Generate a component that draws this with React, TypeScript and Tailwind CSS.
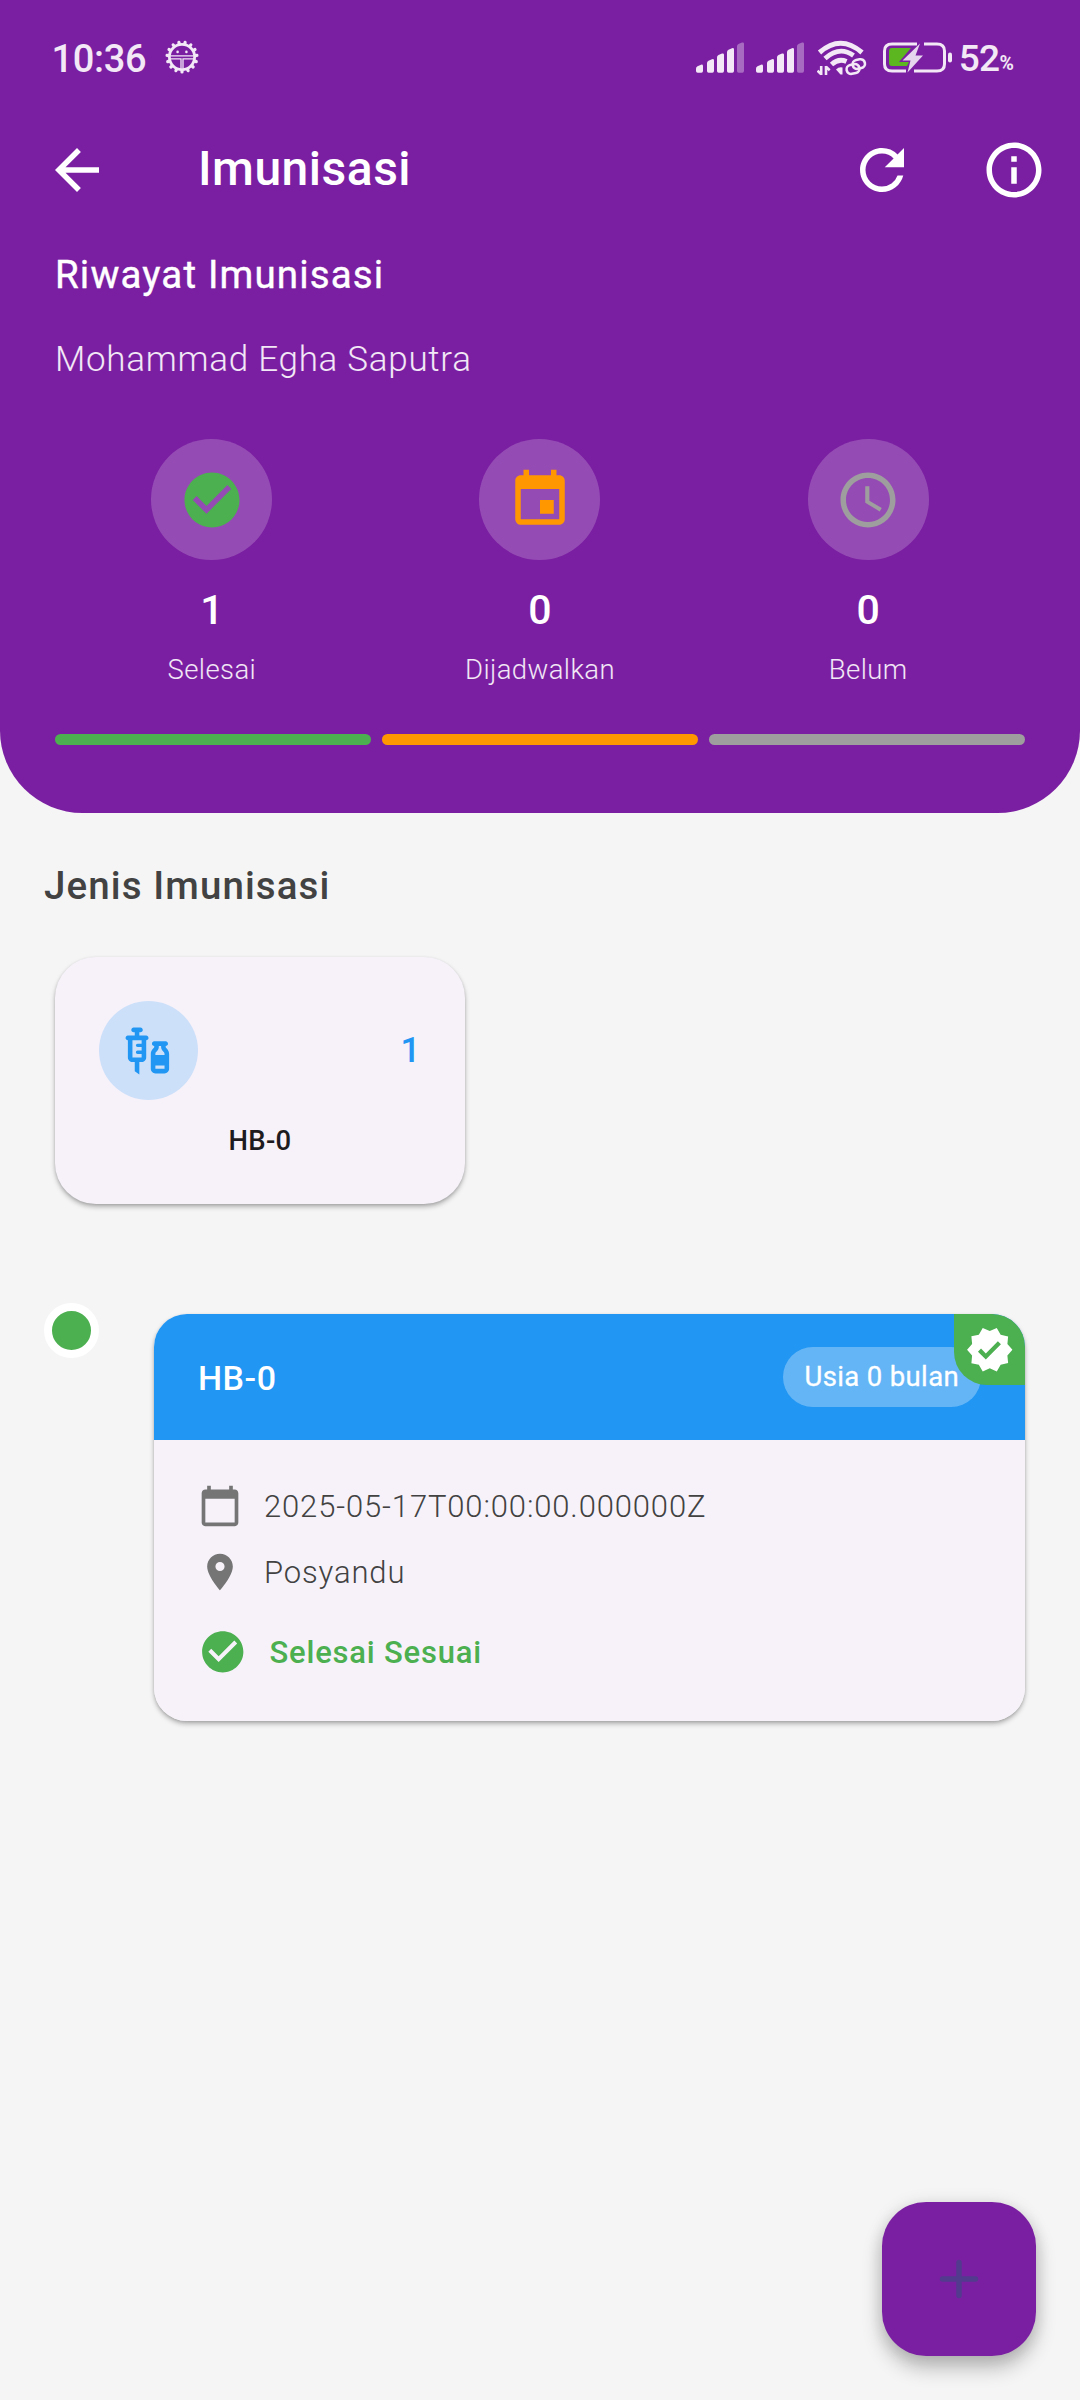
import React from 'react';
import {
  MdArrowBack,
  MdCalendarToday,
  MdCheckCircle,
  MdEvent,
  MdInfoOutline,
  MdPlace,
  MdRefresh,
  MdSchedule,
  MdVaccines,
  MdVerified,
} from 'react-icons/md';

const signalBars = [
  { x: 0, top: 22.5 },
  { x: 11, top: 17 },
  { x: 21, top: 11.3 },
  { x: 31, top: 6 },
  { x: 41, top: 0.3 },
];

function GearIcon() {
  const teeth = Array.from({ length: 15 }, (_, i) => i * 24 + 12);
  return (
    <svg width="34" height="34" viewBox="0 0 34 34" fill="none" stroke="currentColor" className="mb-[19.5px] ml-[19px]">
      <circle cx="17" cy="17" r="12.6" strokeWidth="2.8" />
      {teeth.map((a) => (
        <path key={a} d="M17 3.6V2" strokeWidth="3.2" strokeLinecap="round" transform={`rotate(${a} 17 17)`} />
      ))}
      <path d="M5.500 15.900H28.500M5.500 18.800H16V28.500M28.500 18.800H18V28.500" strokeWidth="1.3" />
      <circle cx="12.6" cy="11.9" r="1.3" fill="currentColor" stroke="none" />
      <circle cx="21.4" cy="11.9" r="1.3" fill="currentColor" stroke="none" />
    </svg>
  );
}

function SignalIcon() {
  return (
    <svg width="48" height="31" viewBox="0 0 48 31" fill="currentColor" className="mb-5">
      {signalBars.map(({ x, top }, i) => (
        <path
          key={x}
          opacity={i === 4 ? 0.38 : 1}
          d={`M${x} ${top + 4}Q${x} ${top + 2.5} ${x + 1.5} ${top + 1.8}L${x + 5} ${top + 0.2}Q${x + 7} ${top - 0.3} ${x + 7} ${top + 1.5}V29Q${x + 7} 30.7 ${x + 5.3} 30.7H${x + 1.7}Q${x} 30.7 ${x} 29Z`}
        />
      ))}
    </svg>
  );
}

function WifiIcon() {
  return (
    <svg width="50" height="36" viewBox="0 0 50 36" fill="none" stroke="currentColor" className="mb-[17px] ml-[13px]">
      <path d="M2.500 12.500Q23.500 -6 45 12.500" strokeWidth="5" />
      <path d="M8 18.500Q22.500 5.500 36.500 15.500" strokeWidth="4.8" />
      <path d="M14.500 24.500Q21.500 18 29.500 21.500" strokeWidth="4.8" />
      <path d="M19 29.500Q22 26.500 25.500 27.500V34.500H23.500Z" fill="currentColor" stroke="none" />
      <path d="M4.200 26V35M9 35V26M0.500 30.800L4.200 34.200M12.700 30.200L9 26.800" strokeWidth="2.6" />
      <rect x="29.500" y="24.500" width="13" height="9" rx="4.5" strokeWidth="2.6" transform="rotate(-12 36 29)" />
      <rect x="35.500" y="19.500" width="12.500" height="9" rx="4.5" strokeWidth="2.6" transform="rotate(-12 42 24)" />
    </svg>
  );
}

function BatteryIcon() {
  return (
    <svg width="70" height="32" viewBox="0 0 70 32" className="mb-[19px] ml-[16px]">
      <path
        d="M34 2H9Q1.500 2 1.500 9V22Q1.500 29 9 29H23M31 29H54Q61.500 29 61.500 22V9Q61.500 2 54 2H41"
        fill="none"
        stroke="currentColor"
        strokeWidth="3"
      />
      <rect x="65" y="10.500" width="4" height="10" rx="2" fill="currentColor" />
      <path d="M9 6H28L16 20H26L24 24H9Q6 24 6 21V9Q6 6 9 6Z" fill="#5bb61f" />
      <path d="M37 1.500L19.500 18.500H27.500L24.500 30.500L40 13.500H32.500Z" fill="#e6d6ee" />
    </svg>
  );
}

function StatusBar() {
  return (
    <div className="flex h-[93px] items-end pr-[62.500px] pl-[51.500px] text-[#f2e8f6]">
      <span className="mb-3 text-[38px] leading-[44px] font-medium tracking-[-0.3px]">10:36</span>
      <GearIcon />
      <div className="ml-auto flex items-end">
        <div className="flex gap-3">
          <SignalIcon />
          <SignalIcon />
        </div>
        <WifiIcon />
        <BatteryIcon />
        <span className="mb-3 ml-[6px] text-[37px] leading-[44px] font-medium tracking-[-0.6px]">52</span>
        <span className="mb-[17px] w-[18px] text-[19.500px] leading-[24px] font-bold tracking-[-0.5px]">%</span>
      </div>
    </div>
  );
}

function AppBar() {
  return (
    <div className="flex h-[154px] items-center pr-[33px] pl-11 text-white">
      <MdArrowBack size={66} />
      <h1 className="mt-[-3px] ml-[88px] text-[48px] leading-[56px] font-medium tracking-[0.5px]">Imunisasi</h1>
      <div className="ml-auto flex gap-[66px]">
        <MdRefresh size={66} />
        <MdInfoOutline size={66} />
      </div>
    </div>
  );
}

function Stat({ icon, value, label }: { icon: React.ReactNode; value: string; label: string }) {
  return (
    <div className="flex flex-col items-center">
      <div className="flex size-[121px] items-center justify-center rounded-full bg-white/20">{icon}</div>
      <span className="mt-[25px] text-[41px] leading-[50px] font-medium text-white">{value}</span>
      <span className="mt-[18px] text-[27.5px] leading-[34px] font-light tracking-[0.4px] text-white/90">{label}</span>
    </div>
  );
}

function Header() {
  return (
    <header className="h-[813.300px] rounded-b-[82.5px] bg-[#7b1fa2]">
      <StatusBar />
      <AppBar />
      <div className="px-[55px] pt-1.5">
        <h2 className="text-[38.5px] leading-[44px] font-normal tracking-[1.15px] text-white [-webkit-text-stroke:0.4px_white]">
          Riwayat Imunisasi
        </h2>
        <p className="mt-[41px] text-[35px] leading-[44px] font-light tracking-[0.72px] text-white/90">
          Mohammad Egha Saputra
        </p>
        <div className="mt-[57px] flex justify-around">
          <Stat icon={<MdCheckCircle size={66} color="#4caf50" />} value="1" label="Selesai" />
          <Stat icon={<MdEvent size={66} color="#ff9800" />} value="0" label="Dijadwalkan" />
          <Stat icon={<MdSchedule size={66} color="#9e9e9e" />} value="0" label="Belum" />
        </div>
        <div className="mt-[46.500px] grid grid-cols-3 gap-[11px]">
          <div className="h-[11px] rounded-full bg-[#4caf50]" />
          <div className="h-[11px] rounded-full bg-[#ff9800]" />
          <div className="h-[11px] rounded-full bg-[#9e9e9e]" />
        </div>
      </div>
    </header>
  );
}

function TypeCard() {
  return (
    <div className="mt-[49px] ml-[11px] h-[247px] w-[410px] rounded-[41px] bg-[#f7f2fa] p-11 shadow-[0_3px_5px_rgba(0,0,0,0.26),0_1px_3px_rgba(0,0,0,0.12)]">
      <div className="flex items-center justify-between">
        <div className="flex size-[99px] items-center justify-center rounded-full bg-[#cde0f9]">
          <MdVaccines size={55} color="#2196f3" />
        </div>
        <span className="mt-0.5 text-[35px] leading-[44px] font-medium tracking-[0.7px] text-[#2196f3]">1</span>
      </div>
      <p className="mt-[24px] text-center text-[27.5px] leading-[34px] font-medium tracking-[0.3px] text-[#1d1b20]">HB-0</p>
    </div>
  );
}

function HistoryCard() {
  return (
    <article className="relative h-[407px] w-[871px] overflow-hidden rounded-[33px] bg-[#f7f2fa]">
      <div className="flex h-[126.500px] items-center justify-between bg-[#2196f3] px-11">
        <h3 className="mt-0.5 text-[34px] leading-[44px] font-medium tracking-[0.5px] text-white">HB-0</h3>
        <span className="flex h-[60.500px] items-center rounded-full bg-white/30 px-[22px] text-[27.5px] font-normal tracking-[0.35px] text-white [-webkit-text-stroke:0.3px_white]">
          Usia 0 bulan
        </span>
      </div>
      <div className="px-11 pt-11 text-[#424242]">
        <div className="flex h-[44px] items-center gap-[22px]">
          <MdCalendarToday size={44} color="#757575" />
          <span className="mt-0.5 text-[31px] leading-[40px] font-light tracking-[0.86px]">2025-05-17T00:00:00.000000Z</span>
        </div>
        <div className="mt-[22px] flex h-[44px] items-center gap-[22px]">
          <MdPlace size={44} color="#757575" />
          <span className="mt-0.5 text-[31px] leading-[40px] font-light tracking-[0.86px]">Posyandu</span>
        </div>
        <div className="mt-[33px] flex h-[49.500px] items-center gap-[22px] text-[#4caf50]">
          <MdCheckCircle size={49.5} />
          <span className="mt-px text-[31px] leading-[40px] font-medium tracking-[0.8px]">Selesai Sesuai</span>
        </div>
      </div>
      <div className="absolute top-0 right-0 flex size-[71.500px] items-center justify-center rounded-bl-[33px] bg-[#4caf50]">
        <MdVerified size={49.5} color="#ffffff" />
      </div>
    </article>
  );
}

function AddButton() {
  return (
    <button
      aria-label="Tambah"
      className="fixed top-[2202px] left-[882px] flex size-[154px] items-center justify-center rounded-[44px] bg-[#7b1fa2] shadow-[0_12px_20px_rgba(0,0,0,0.24),0_2px_18px_rgba(0,0,0,0.12)]"
    >
      <svg width="40" height="40" viewBox="0 0 40 40" stroke="#533a8e" strokeWidth="5.500" strokeLinecap="round">
        <path d="M20 3.500V36.500M3.500 20H36.500" />
      </svg>
    </button>
  );
}

export default function App() {
  return (
    <div className="h-[2400px] w-[1080px] overflow-hidden bg-[#f5f5f5] font-['Roboto',sans-serif]">
      <Header />
      <main className="px-11 pt-[50.500px]">
        <h2 className="text-[38.5px] leading-[44px] font-medium tracking-[1.1px] text-[#424242]">Jenis Imunisasi</h2>
        <TypeCard />
        <div className="mt-[99px] flex items-start gap-[55px]">
          <div className="size-[55px] shrink-0 rounded-full border-8 border-white bg-[#4caf50]" />
          <div className="mt-[11px] rounded-[33px] shadow-[0_3px_5px_rgba(0,0,0,0.26),0_1px_3px_rgba(0,0,0,0.12)]">
            <HistoryCard />
          </div>
        </div>
      </main>
      <AddButton />
    </div>
  );
}
